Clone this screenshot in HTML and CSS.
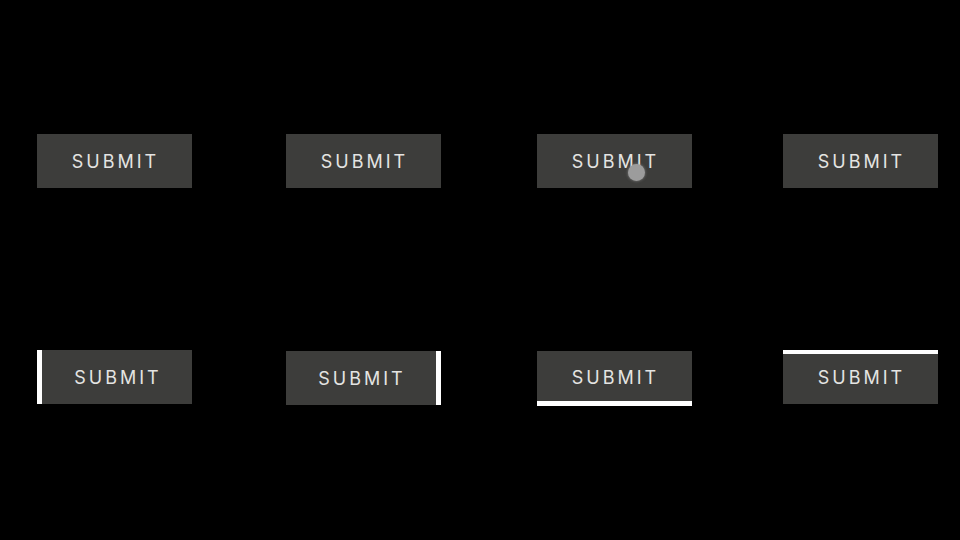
FILE: index.html
```html
<!DOCTYPE html>
<html lang="en">
<head>
    <meta charset="UTF-8">
    <title>Submit buttons</title>
    <link rel="stylesheet" href="styles.css">
</head>
<body>
    <div class="grid">
        <button class="btn">SUBMIT</button>
        <button class="btn">SUBMIT</button>
        <button class="btn btn-click">SUBMIT<span class="cursor"></span></button>
        <button class="btn">SUBMIT</button>

        <button class="btn line-left">SUBMIT</button>
        <button class="btn line-right">SUBMIT</button>
        <button class="btn line-bottom">SUBMIT</button>
        <button class="btn line-top">SUBMIT</button>
    </div>
</body>
</html>
```

FILE: styles.css
```css
body {
    margin: 0;
    background-color: #000;
    font-family: Inter, "Liberation Sans", sans-serif;
}
.grid {
    display: grid;
    grid-template-columns: 249px 251px 246px 155px;
    row-gap: 161px;
    padding: 134px 0 0 37px;
}
.btn {
    position: relative;
    width: 155px;
    height: 54px;
    box-sizing: border-box;
    padding: 0 0 0 2px;
    background-color: #3d3d3b;
    color: #e4e4e2;
    border: none;
    font-family: inherit;
    font-size: 18px;
    letter-spacing: 3px;
    cursor: pointer;
}
.line-left {
    margin-top: 1px;
    border-left: 5px solid #fff;
    padding-left: 2px;
}
.line-right {
    margin-top: 2px;
    border-right: 5px solid #fff;
}
.line-bottom {
    margin-top: 2px;
    height: 55px;
    border-bottom: 5px solid #fff;
    padding-top: 2px;
}
.line-top {
    margin-top: 1px;
    border-top: 4px solid #fff;
    padding-bottom: 4px;
}
.cursor {
    position: absolute;
    left: 91px;
    top: 30px;
    width: 17px;
    height: 17px;
    border-radius: 50%;
    background-color: #9c9c9c;
    box-shadow: 0 0 3px rgba(180,180,180,0.6);
}
```
